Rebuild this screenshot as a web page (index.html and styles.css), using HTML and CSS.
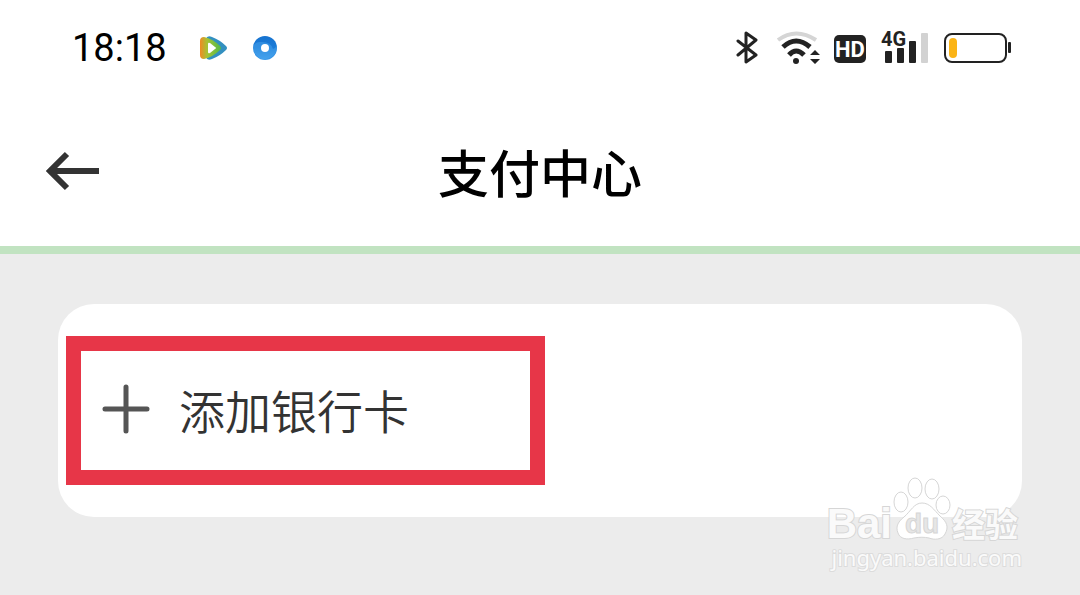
FILE: index.html
```
<!DOCTYPE html>
<html lang="zh-CN">
<head>
    <meta charset="UTF-8">
    <meta name="viewport" content="width=device-width, initial-scale=1.0">
    <title>支付中心</title>
    <link rel="stylesheet" href="styles.css">
</head>
<body>
    <div class="status">
        <span class="time">18:18</span>
        <svg class="app" width="28" height="28" viewBox="0 0 28 28">
            <defs>
                <linearGradient id="play" x1="0" y1="0" x2="1" y2="0">
                    <stop offset="0" stop-color="#f08a24"/>
                    <stop offset="0.35" stop-color="#a3c435"/>
                    <stop offset="1" stop-color="#54b948"/>
                </linearGradient>
                <linearGradient id="ball" x1="0" y1="0" x2="0" y2="1">
                    <stop offset="0" stop-color="#1673d0"/>
                    <stop offset="0.5" stop-color="#1c7cd8"/>
                    <stop offset="1" stop-color="#3c9bea"/>
                </linearGradient>
            </defs>
            <path d="M6 5Q7 1 12 3Q20 6 26 12Q28 14 26 16Q20 22 12 25Q7 27 6 23Z" fill="#3390c0"/>
            <path d="M0 7Q0 3 4 3Q13 5 20 12Q22 14 20 16Q13 23 4 25Q0 25 0 21Z" fill="url(#play)"/>
            <path d="M8 10Q8 8 10 9L15 13Q17 14 15 15L10 19Q8 20 8 18Z" fill="#fff"/>
        </svg>
        <svg class="app" width="26" height="26" viewBox="0 0 26 26">
            <circle cx="12" cy="13" r="12" fill="url(#ball)"/>
            <path d="M0 13Q1 6 9 7Q18 7 20 14Q24 13 23 8Q26 16 20 21Q10 28 3 20Q0 17 0 13Z" fill="#55aef2" opacity="0.4"/>
            <circle cx="12" cy="13" r="4" fill="#fff"/>
        </svg>
        <div class="signals">
            <svg width="26" height="36" viewBox="0 0 26 36" fill="none" stroke="#222" stroke-width="3" stroke-linejoin="round" stroke-linecap="round">
                <path d="M2 11L20 25L10 32V3L20 10L2 25"/>
            </svg>
            <svg width="44" height="36" viewBox="0 0 44 36" fill="none" stroke="#222" stroke-width="5">
                <path d="M2 10Q20 -3 40 10" stroke="#d5d5d5" stroke-width="4"/>
                <path d="M7 17Q20 5 34 17"/>
                <path d="M13 25Q20 17 28 25"/>
                <circle cx="20" cy="31" r="3" fill="#222" stroke="none"/>
                <path d="M34 25L39 20L44 25ZM34 29L39 34L44 29Z" fill="#222" stroke="none"/>
            </svg>
            <svg width="32" height="36" viewBox="0 0 32 36">
                <rect y="5" width="32" height="28" rx="5" fill="#222"/>
                <text class="hd" x="16" y="27" text-anchor="middle">HD</text>
            </svg>
            <svg width="50" height="48" viewBox="0 -6 50 48" fill="#222">
                <text class="net" x="1" y="16">4G</text>
                <rect x="5" y="21" width="7" height="12" rx="1"/>
                <rect x="17" y="18" width="7" height="15" rx="1"/>
                <rect x="29" y="11" width="7" height="22" rx="1"/>
                <rect x="41" y="3" width="7" height="30" rx="1" fill="#d2d2d2"/>
            </svg>
            <svg width="67" height="36" viewBox="0 0 67 36">
                <rect x="1" y="4" width="61" height="28" rx="7" fill="none" stroke="#222" stroke-width="2"/>
                <rect x="5" y="8" width="8" height="20" rx="4" fill="#fbb416"/>
                <rect x="64" y="12" width="3" height="11" rx="1" fill="#222"/>
            </svg>
        </div>
    </div>
    <header class="header">
        <button class="back" type="button" aria-label="返回">
            <svg width="54" height="40" viewBox="0 0 54 40" fill="none" stroke="#333" stroke-width="6">
                <path d="M53 20H6M21 3L4 20L21 37"/>
            </svg>
        </button>
        <h1>支付中心</h1>
    </header>
    <main class="content">
        <div class="card">
            <button class="add" type="button">
                <svg width="48" height="50" viewBox="0 0 48 50" stroke="#555" stroke-width="5" stroke-linecap="round">
                    <path d="M24 3V47M3 25H45"/>
                </svg>
                <span>添加银行卡</span>
            </button>
        </div>
        <div class="watermark">
            <div class="logo">
                <span class="bai">Bai</span>
                <svg width="60" height="64" viewBox="0 0 60 64" fill="#fff" stroke="#d6d6d6" stroke-width="1">
                    <ellipse cx="9" cy="25" rx="7" ry="10"/>
                    <ellipse cx="23" cy="11" rx="7" ry="10"/>
                    <ellipse cx="40" cy="12" rx="7" ry="10"/>
                    <ellipse cx="51" cy="28" rx="7" ry="9"/>
                    <path d="M30 26C38 26 42 33 48 39C55 45 57 50 53 57C50 63 42 63 37 61C32 60 28 60 22 61C15 63 8 62 6 56C3 49 7 44 12 40C19 34 22 26 30 26Z"/>
                    <text class="du" x="30" y="56" text-anchor="middle">du</text>
                </svg>
                <span class="jy">经验</span>
            </div>
            <div class="site">jingyan.baidu.com</div>
        </div>
    </main>
</body>
</html>
```

FILE: styles.css
```
*{
    box-sizing: border-box;
}
body{
    margin: 0;
    min-height: 100vh;
    display: flex;
    flex-direction: column;
    background-color: #fff;
    font-family: "Noto Sans", "Noto Sans CJK SC", sans-serif;
}
svg{
    display: block;
    flex-shrink: 0;
}
button{
    padding: 0;
    border: 0;
    background: none;
    font-family: inherit;
    cursor: pointer;
}
.status{
    display: flex;
    align-items: center;
    height: 96px;
    padding: 0 69px 0 72px;
}
.time{
    width: 103px;
    font-family: Roboto, sans-serif;
    font-size: 38px;
    line-height: 48px;
    color: #000;
}
.app{
    margin-left: 25px;
}
.signals{
    display: flex;
    align-items: center;
    gap: 14px;
    margin-left: auto;
}
.hd{
    font: bold 22px "Roboto", sans-serif;
    fill: #fff;
}
.net{
    font: bold 20px "Roboto", sans-serif;
}
.header{
    display: grid;
    grid-template-columns: 54px 1fr 54px;
    align-items: center;
    height: 158px;
    padding: 0 46px;
    border-bottom: 8px solid #c1e3c1;
}
h1{
    margin: 0;
    font-family: "Noto Sans CJK SC", sans-serif;
    font-size: 51px;
    font-weight: 500;
    line-height: 72px;
    text-align: center;
    color: #000;
}
.content{
    position: relative;
    flex: 1;
    padding: 50px 58px 78px;
    background-color: #ececec;
}
.card{
    padding: 32px 8px;
    border-radius: 36px;
    background-color: #fff;
}
.add{
    display: flex;
    align-items: center;
    gap: 29px;
    width: 479px;
    max-width: 100%;
    height: 149px;
    padding: 0 0 4px 21px;
    border: 15px solid #e73648;
    font-family: "Noto Sans CJK SC", sans-serif;
    font-size: 46px;
    font-weight: 350;
    line-height: 64px;
    color: #333;
}
.watermark{
    position: absolute;
    right: 58px;
    bottom: 22px;
    color: #fafafa;
}
.logo{
    display: flex;
    align-items: flex-end;
    margin-right: 4px;
}
.bai, .jy{
    -webkit-text-stroke: 2px #d6d6d6;
    paint-order: stroke fill;
    font-weight: bold;
}
.bai{
    font-family: "Liberation Sans", sans-serif;
    font-size: 42px;
    line-height: 34px;
}
.jy{
    font-family: "Noto Sans CJK SC", sans-serif;
    font-size: 33px;
    line-height: 36px;
}
.du{
    font: bold 28px "Liberation Sans", sans-serif;
    fill: #e6e6e6;
}
.site{
    font-size: 22px;
    line-height: 32px;
    text-align: right;
    -webkit-text-stroke: 2px #dcdcdc;
    paint-order: stroke fill;
}
```
